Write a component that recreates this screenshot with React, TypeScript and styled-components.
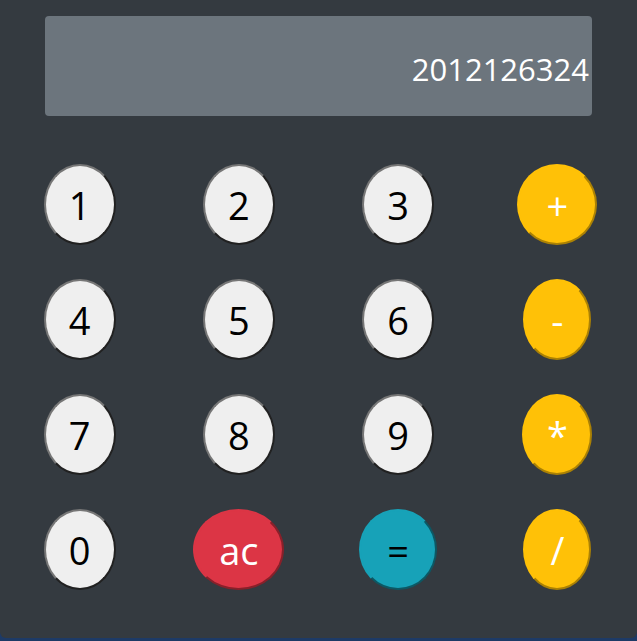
import React, { useState } from "react";
import styled, { createGlobalStyle } from "styled-components";

const Global = createGlobalStyle`
  html, body { margin: 0; padding: 0; }
  body {
    background: #1d3a66;
    font-family: "Segoe UI", "Open Sans", "Noto Sans", sans-serif;
  }
`;

const Panel = styled.div`
  width: 637px;
  height: 638px;
  box-sizing: border-box;
  background: #343a40;
  border-radius: 0 0 6px 6px;
  padding-top: 16px;
  display: flex;
  flex-direction: column;
`;

const Display = styled.div`
  margin: 0 45px;
  height: 100px;
  background: #6c757d;
  border-radius: 4px;
  color: #ffffff;
  font-size: 31px;
  display: flex;
  align-items: center;
  justify-content: flex-end;
  padding: 6px 3px 0 0;
  box-sizing: border-box;
`;

const Keys = styled.div`
  margin-top: 48px;
  display: grid;
  grid-template-columns: repeat(4, 1fr);
  row-gap: 34px;
  justify-items: center;
`;

type Tone = "light" | "warning" | "danger" | "info";

const tones: Record<Tone, { bg: string; fg: string; border: string }> = {
  light: { bg: "#efefef", fg: "#000000", border: "#767676" },
  warning: { bg: "#ffc107", fg: "#ffffff", border: "#ffc107" },
  danger: { bg: "#dc3545", fg: "#ffffff", border: "#dc3545" },
  info: { bg: "#17a2b8", fg: "#000000", border: "#17a2b8" },
};

const Key = styled.button<{ $tone: Tone; $w: number }>`
  width: ${(p) => p.$w}px;
  height: 81px;
  padding: 0;
  border-radius: 50%;
  border: 2px outset ${(p) => tones[p.$tone].border};
  background: ${(p) => tones[p.$tone].bg};
  color: ${(p) => tones[p.$tone].fg};
  font-family: "Segoe UI", "Open Sans", "Noto Sans", sans-serif;
  font-size: 38px;
  line-height: 1;
  display: flex;
  align-items: center;
  justify-content: center;
  cursor: pointer;
`;

const keys: { label: string; tone: Tone; w: number }[] = [
  { label: "1", tone: "light", w: 72 },
  { label: "2", tone: "light", w: 72 },
  { label: "3", tone: "light", w: 72 },
  { label: "+", tone: "warning", w: 80 },
  { label: "4", tone: "light", w: 72 },
  { label: "5", tone: "light", w: 72 },
  { label: "6", tone: "light", w: 72 },
  { label: "-", tone: "warning", w: 68 },
  { label: "7", tone: "light", w: 72 },
  { label: "8", tone: "light", w: 72 },
  { label: "9", tone: "light", w: 72 },
  { label: "*", tone: "warning", w: 70 },
  { label: "0", tone: "light", w: 72 },
  { label: "ac", tone: "danger", w: 91 },
  { label: "=", tone: "info", w: 78 },
  { label: "/", tone: "warning", w: 68 },
];

export default function App() {
  const [value] = useState("2012126324");
  return (
    <>
      <Global />
      <Panel>
        <Display>{value}</Display>
        <Keys>
          {keys.map((k) => (
            <Key key={k.label} $tone={k.tone} $w={k.w}>
              {k.label}
            </Key>
          ))}
        </Keys>
      </Panel>
    </>
  );
}
